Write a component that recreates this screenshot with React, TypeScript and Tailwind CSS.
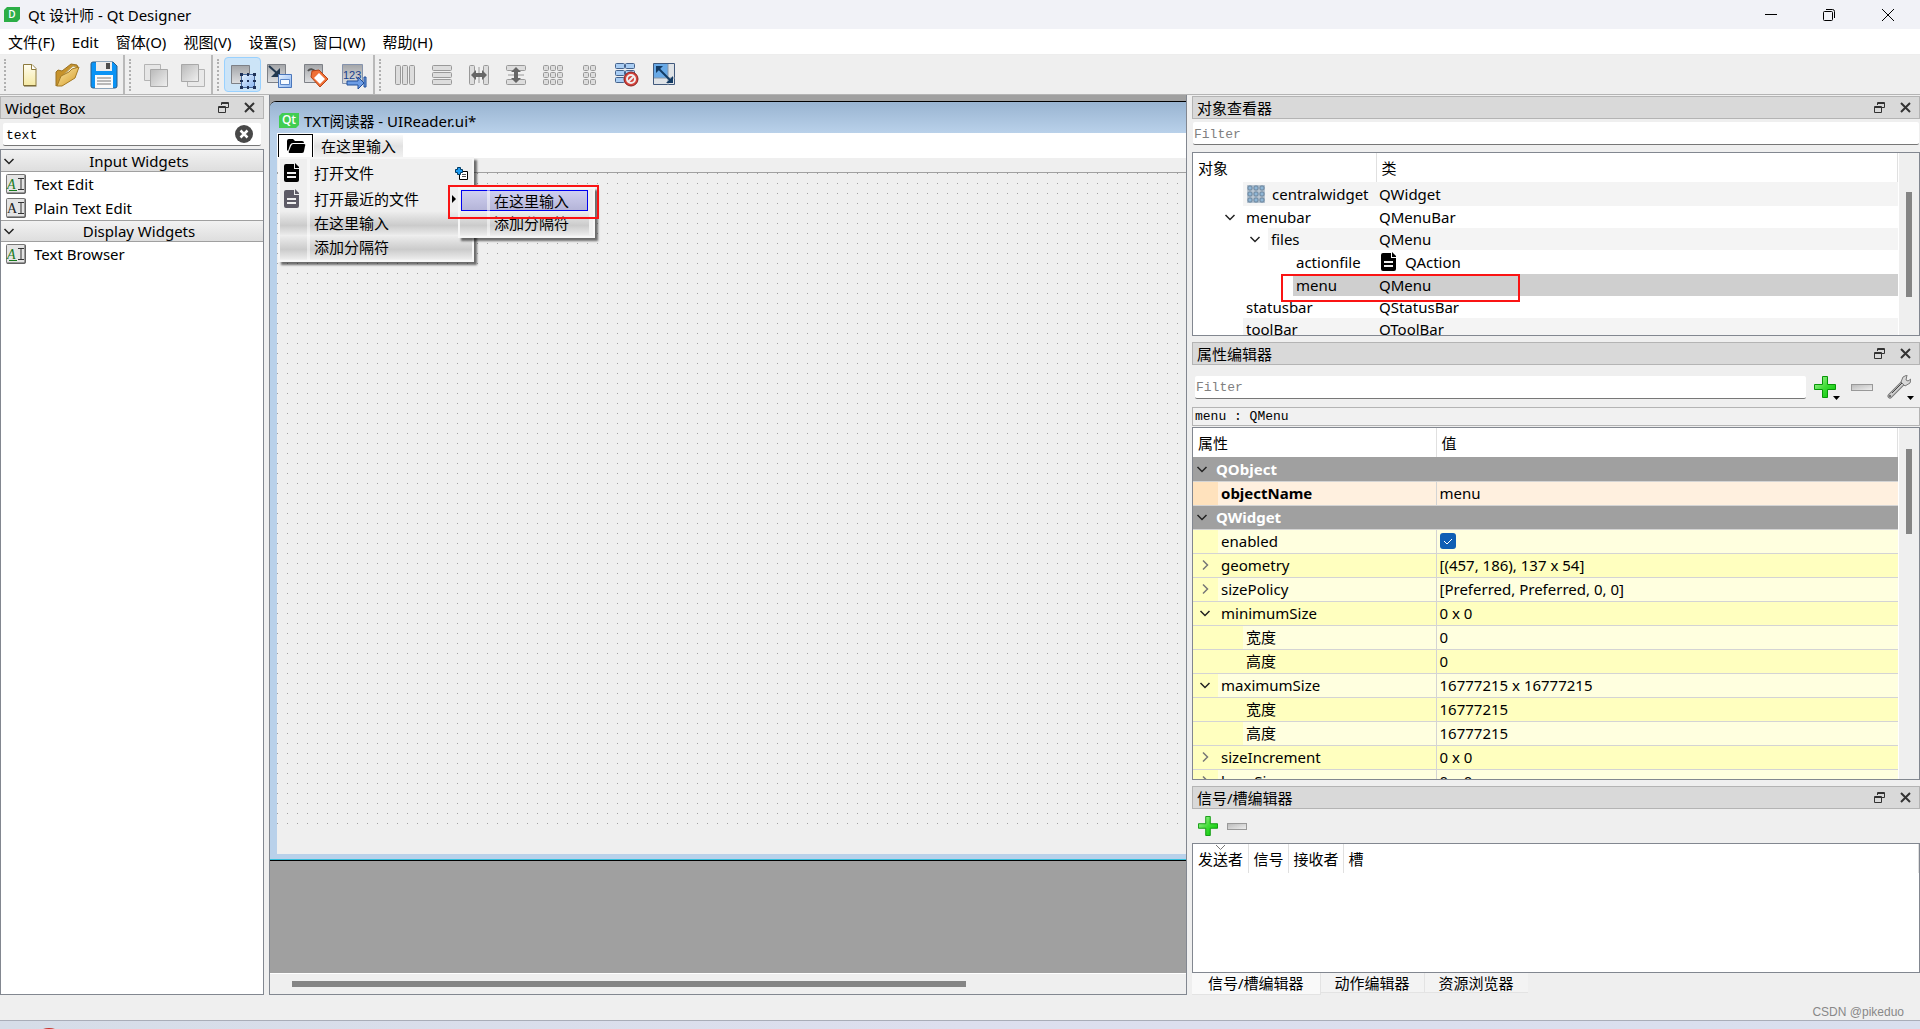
import { useState } from 'react'
import type { ReactNode } from 'react'
import clsx from 'clsx'

const menus = ['文件(F)', 'Edit', '窗体(O)', '视图(V)', '设置(S)', '窗口(W)', '帮助(H)']

function Gradients() {
  return (
    <svg width="0" height="0" className="absolute" aria-hidden="true">
      <defs>
        <linearGradient id="gray" x1="0" y1="0" x2="1" y2="1">
          <stop offset="0" stopColor="#b9b9b9" />
          <stop offset="1" stopColor="#f0f0f0" />
        </linearGradient>
        <linearGradient id="steel" x1="0" y1="0" x2="0" y2="1">
          <stop offset="0" stopColor="#a3a5a8" />
          <stop offset="1" stopColor="#dedfe1" />
        </linearGradient>
        <linearGradient id="sky" x1="0" y1="0" x2="1" y2="1">
          <stop offset="0" stopColor="#e6f2ff" />
          <stop offset="1" stopColor="#8bb5f0" />
        </linearGradient>
        <linearGradient id="paper" x1="0" y1="0" x2="0" y2="1">
          <stop offset="0" stopColor="#fffdf0" />
          <stop offset="1" stopColor="#f5e9a4" />
        </linearGradient>
        <linearGradient id="gold" x1="0" y1="0" x2="1" y2="1">
          <stop offset="0" stopColor="#fbe9a8" />
          <stop offset="1" stopColor="#d59a26" />
        </linearGradient>
        <linearGradient id="green" x1="0" y1="0" x2="1" y2="1">
          <stop offset="0" stopColor="#b8f5a8" />
          <stop offset="0.5" stopColor="#3fdc36" />
          <stop offset="1" stopColor="#00c400" />
        </linearGradient>
      </defs>
    </svg>
  )
}

function Icon({ children, size = 28 }: { children: ReactNode; size?: number }) {
  return (
    <svg width={size} height={size} viewBox={`0 0 ${size} ${size}`} fill="none" aria-hidden="true" className="shrink-0">
      {children}
    </svg>
  )
}

const NewIcon = () => (
  <Icon>
    <path d="M7.500 3.500h8.500l4 4v17H7.500z" fill="url(#paper)" stroke="#8d7a3c" />
    <path d="M15.500 3.500v5h4.500" fill="#fff" stroke="#8d7a3c" />
    <path d="M8 25h12.500" stroke="#6d5f30" />
  </Icon>
)

const OpenIcon = () => (
  <Icon>
    <path d="M3 11l2-2 4 1L18 3l6 1 1 3-17 15-5 3z" fill="#c7932c" stroke="#9a7223" />
    <path d="M6 18L20 5l3 1v4L8 22z" fill="#f4f0de" stroke="#b7a060" />
    <path d="M4 25l4-10 8-4 3-3 7-2-4 11-13 8z" fill="url(#gold)" stroke="#a57a22" />
  </Icon>
)

const SaveIcon = () => (
  <Icon>
    <path d="M1 3q0-2 2-2h20l4 4v20q0 2-2 2H3q-2 0-2-2z" fill="#0a93f5" stroke="#2a5d88" />
    <path d="M6 1h16v9H6z" fill="#ececec" />
    <path d="M16 2h4v6h-4z" fill="#4d4d4d" />
    <path d="M5 14h18v13H5z" fill="#fafafa" />
    <path d="M7 17h14M7 20h14M7 23h14" stroke="#777" />
  </Icon>
)

const BackIcon = () => (
  <Icon>
    <path d="M3.500 3.500h16v16h-16z" fill="#e6e6e6" stroke="#b4b4b4" />
    <path d="M9.500 8.500h17v17h-17z" fill="url(#gray)" stroke="#a8a8a8" />
  </Icon>
)

const FrontIcon = () => (
  <Icon>
    <path d="M9.500 8.500h17v17h-17z" fill="#e9e9e9" stroke="#b4b4b4" />
    <path d="M3.500 3.500h17v17h-17z" fill="url(#gray)" stroke="#a8a8a8" />
  </Icon>
)

const EditWidgetsIcon = () => (
  <Icon>
    <path d="M2.500 4.500h18v18h-18z" fill="url(#steel)" stroke="#7d8086" />
    <path d="M12.500 13.500h13v13h-13z" fill="url(#sky)" stroke="#47699c" />
    <path d="M11 12h3v3h-3zM18 12h2v3h-2zM24 12h3v3h-3zM11 19h3v2h-3zM24 19h3v2h-3zM11 25h3v3h-3zM18 25h2v3h-2zM24 25h3v3h-3zM18 19h2v2h-2z" fill="#1f3157" />
  </Icon>
)

const SignalsIcon = () => (
  <Icon>
    <path d="M1.500 3.500h18v18h-18z" fill="url(#steel)" stroke="#7d8086" />
    <path d="M3 5l10 9" stroke="#22384f" strokeWidth="2" />
    <path d="M14 7v9H5z" fill="#22384f" />
    <path d="M12.500 13.500h13v13h-13z" fill="url(#sky)" stroke="#4a76bb" />
    <path d="M14.500 18.500h9v5h-9z" fill="#f5faff" stroke="#5b87c9" />
  </Icon>
)

const BuddiesIcon = () => (
  <Icon>
    <path d="M1.500 3.500h18v18h-18z" fill="url(#steel)" stroke="#7d8086" />
    <path d="M5 10q3-4 8 1" stroke="#505050" strokeWidth="2" />
    <path d="M9 10l7-1 9 9-8 8-9-10z" fill="#ef6f35" stroke="#b54316" />
    <path d="M16 12l6 6-5 5-6-6z" fill="#fff" />
  </Icon>
)

const TabOrderIcon = () => (
  <Icon>
    <path d="M2.500 3.500h20v19h-20z" fill="url(#steel)" stroke="#8593ad" />
    <text x="3" y="18" fontSize="11" fill="#17408c" fontFamily="Liberation Sans, sans-serif">123</text>
    <path d="M7 20h11v-4l6 6-6 6v-4H7z" fill="#6d9de5" stroke="#204e99" />
    <path d="M24 16h2v10h-2z" fill="#6d9de5" stroke="#204e99" />
  </Icon>
)

const cell = { fill: '#ddd', stroke: '#999' }

const HLayoutIcon = () => (
  <Icon>
    {[4, 11, 18].map((x) => (
      <rect key={x} x={x + 0.5} y="4.5" width="5" height="19" rx="1" {...cell} />
    ))}
  </Icon>
)

const VLayoutIcon = () => (
  <Icon>
    {[4, 11, 18].map((y) => (
      <rect key={y} x="4.500" y={y + 0.5} width="19" height="5" rx="1" {...cell} />
    ))}
  </Icon>
)

const HSplitIcon = () => (
  <Icon>
    <rect x="4.500" y="4.500" width="5" height="19" rx="1" {...cell} />
    <rect x="18.500" y="4.500" width="5" height="19" rx="1" {...cell} />
    <path d="M14 6v16" stroke="#9a9a9a" />
    <path d="M6 14l5-5v3h6V9l5 5-5 5v-3h-6v3z" fill="#666" />
  </Icon>
)

const VSplitIcon = () => (
  <Icon>
    <rect x="4.500" y="4.500" width="19" height="5" rx="1" {...cell} />
    <rect x="4.500" y="18.500" width="19" height="5" rx="1" {...cell} />
    <path d="M6 14h16" stroke="#9a9a9a" />
    <path d="M14 6l5 5h-3v6h3l-5 5-5-5h3v-6H9z" fill="#666" />
  </Icon>
)

const GridIcon = () => (
  <Icon>
    {[4, 11, 18].map((x) =>
      [4, 11, 18].map((y) => <rect key={`${x}-${y}`} x={x + 0.5} y={y + 0.5} width="5" height="5" rx="1" {...cell} />)
    )}
  </Icon>
)

const FormLayoutIcon = () => (
  <Icon>
    {[7, 14].map((x) =>
      [4, 11, 18].map((y) => <rect key={`${x}-${y}`} x={x + 0.5} y={y + 0.5} width="5" height="5" rx="1" {...cell} />)
    )}
  </Icon>
)

const BreakLayoutIcon = () => (
  <Icon>
    {[3, 10, 17].map((y) => (
      <g key={y} fill="#a9cdf3" stroke="#44628c">
        <rect x="2.500" y={y - 0.5} width="9" height="5" rx="1" />
        <rect x="12.500" y={y - 0.5} width="9" height="5" rx="1" />
      </g>
    ))}
    <circle cx="18" cy="18" r="7" fill="#d5433c" stroke="#8d2320" />
    <circle cx="18" cy="18" r="4" stroke="#eee" strokeWidth="2" />
    <path d="M15 21l6-6" stroke="#eee" strokeWidth="2" />
  </Icon>
)

const AdjustSizeIcon = () => (
  <Icon>
    <path d="M3.500 2.500h21v21h-21z" fill="#dfe3e7" stroke="#41597c" />
    <path d="M4 3h14v14H4z" fill="#68a9e6" />
    <path d="M18 3v21M4 17h21" stroke="#8a97a8" />
    <path d="M9 8l11 11" stroke="#123a63" strokeWidth="2" />
    <path d="M6 5h7l-7 7zM23 22h-7l7-7z" fill="#123a63" />
  </Icon>
)

const toolGroups = [
  [
    { name: '新建', icon: <NewIcon /> },
    { name: '打开', icon: <OpenIcon /> },
    { name: '保存', icon: <SaveIcon /> },
  ],
  [
    { name: '放到后面', icon: <BackIcon /> },
    { name: '放到前面', icon: <FrontIcon /> },
  ],
  [
    { name: '编辑控件', icon: <EditWidgetsIcon />, active: true },
    { name: '编辑信号/槽', icon: <SignalsIcon /> },
    { name: '编辑伙伴', icon: <BuddiesIcon /> },
    { name: '编辑Tab顺序', icon: <TabOrderIcon /> },
  ],
  [
    { name: '水平布局', icon: <HLayoutIcon /> },
    { name: '垂直布局', icon: <VLayoutIcon /> },
    { name: '水平分裂器', icon: <HSplitIcon /> },
    { name: '垂直分裂器', icon: <VSplitIcon /> },
    { name: '栅格布局', icon: <GridIcon /> },
    { name: '窗体布局', icon: <FormLayoutIcon /> },
    { name: '打破布局', icon: <BreakLayoutIcon /> },
    { name: '调整大小', icon: <AdjustSizeIcon /> },
  ],
]

function QtLogo({ letters, width }: { letters: string; width: number }) {
  return (
    <svg width={width} height="15" viewBox={`0 0 ${width} 15`} aria-hidden="true" className="shrink-0">
      <path d={`M3 0H${width}V12L${width - 3} 15H0V3z`} fill={letters === 'D' ? '#2cae46' : '#41cd52'} />
      <text x={width / 2} y="11" fontSize={letters === 'D' ? 10 : 12} fontWeight="600" textAnchor="middle" fill="#fff" fontFamily="Open Sans, sans-serif">
        {letters}
      </text>
    </svg>
  )
}

const DocIcon = ({ color = '#000' }: { color?: string }) => (
  <Icon size={20}>
    <path d="M4 1h8v5h5v11q0 2-2 2H4q-2 0-2-2V3q0-2 2-2z" fill={color} />
    <path d="M13 0l4 4v1h-4z" fill={color} />
    <path d="M5 10h9M5 14h9" stroke="#f0f0f0" strokeWidth="2" />
  </Icon>
)

const FolderIcon = () => (
  <Icon size={20}>
    <path d="M1 14V5q0-2 2-2h4l2 2h7q2 0 2 2H7q-2 0-3 2l-2 6z" fill="#000" />
    <path d="M7 8h11q2 0 1 2l-1 5q0 2-2 2H4q-2 0-1-2l2-5q1-2 2-2z" fill="#000" />
  </Icon>
)

const TextWidgetIcon = ({ color }: { color: string }) => (
  <Icon size={20}>
    <rect x="0.500" y="0.500" width="19" height="19" rx="1" fill="#e4e4e4" stroke="#777" />
    <path d="M19 1v18H1" stroke="#4f4f4f" />
    <text x="1" y="15" fontSize="14" fill={color} fontStyle={color === '#222' ? 'normal' : 'italic'} fontFamily="Liberation Serif, serif">A</text>
    {color !== '#222' && <path d="M3 16.500h8" stroke={color} />}
    <path d="M12 4.500h6M15 5v10M12 15.500h6" stroke="#333" />
  </Icon>
)

const WidgetGridIcon = () => (
  <Icon size={20}>
    <rect x="1" y="1" width="18" height="18" fill="#b9c6d3" />
    {[2, 8, 14].map((x) =>
      [2, 8, 14].map((y) => <rect key={`${x}-${y}`} x={x} y={y} width="4" height="4" rx="1" fill="#8fb6d6" stroke="#6a8299" />)
    )}
  </Icon>
)

const PlusIcon = ({ size }: { size: number }) => (
  <svg width={size} height={size} viewBox="0 0 22 22" aria-hidden="true">
    <path d="M8.500.5h5v8h8v5h-8v8h-5v-8h-8v-5h8z" fill="url(#green)" stroke="#079607" />
  </svg>
)

const MinusIcon = ({ width }: { width: number }) => (
  <svg width={width} height="7" viewBox={`0 0 ${width} 7`} aria-hidden="true">
    <rect x="0.500" y="0.500" width={width - 1} height="6" fill="url(#gray)" stroke="#999" />
  </svg>
)

const DropArrow = () => (
  <svg width="7" height="4" viewBox="0 0 7 4" aria-hidden="true" className="absolute right-0 bottom-0">
    <path d="M0 0h7L3.500 4z" />
  </svg>
)

const Chevron = ({ open, dim }: { open: boolean; dim?: boolean }) => (
  <svg width="12" height="12" viewBox="0 0 12 12" fill="none" stroke={dim ? '#777' : '#222'} strokeWidth="1.500" aria-hidden="true" className="shrink-0">
    <path d={open ? 'M1.500 4L6 8.500 10.500 4' : 'M4 1.500L8.500 6 4 10.500'} />
  </svg>
)

function DockTitle({ title }: { title: string }) {
  return (
    <div className="flex h-[23px] shrink-0 items-center justify-between border border-[#b4b4b4] bg-[#d9d9d9] pr-2 pl-1">
      <h2>{title}</h2>
      <div className="flex gap-[15px]">
        <button type="button" aria-label="浮动">
          <svg width="11" height="11" viewBox="0 0 11 11" fill="none" stroke="#333" aria-hidden="true">
            <path d="M3.500 3V.5h7v5H8M3 1.500h8" />
            <path d="M.5 4.500h7v6h-7zM1 5.500h6" />
          </svg>
        </button>
        <button type="button" aria-label="关闭">
          <svg width="11" height="11" viewBox="0 0 11 11" stroke="#333" strokeWidth="2" aria-hidden="true">
            <path d="M1 1l9 9M10 1l-9 9" />
          </svg>
        </button>
      </div>
    </div>
  )
}

function TitleBar() {
  return (
    <header className="flex h-[29px] shrink-0 items-center justify-between bg-[#f1f2f7]">
      <div className="flex items-center gap-2 pl-1">
        <QtLogo letters="D" width={16} />
        <h1>Qt 设计师 - Qt Designer</h1>
      </div>
      <div className="flex h-full items-center pr-[2px]">
        <button type="button" aria-label="最小化" className="flex w-[58px] justify-center">
          <svg width="12" height="12" stroke="#000" aria-hidden="true"><path d="M0 5.500h12" /></svg>
        </button>
        <button type="button" aria-label="还原" className="flex w-[58px] justify-center">
          <svg width="12" height="12" fill="none" stroke="#000" aria-hidden="true">
            <rect x="0.500" y="2.500" width="9" height="9" rx="1" />
            <path d="M3 .5h6.500q2 0 2 2V9" />
          </svg>
        </button>
        <button type="button" aria-label="关闭" className="flex w-[60px] justify-center">
          <svg width="12" height="12" stroke="#000" aria-hidden="true"><path d="M0 0l12 12M12 0L0 12" /></svg>
        </button>
      </div>
    </header>
  )
}

function Toolbar() {
  return (
    <div className="flex h-10 shrink-0 border-b border-[#b4b4b4] bg-[#efefef]">
      {toolGroups.map((group, i) => (
        <div key={i} className={clsx('flex items-center', i < toolGroups.length - 1 && 'border-r-2 border-[#b9b9b9] pr-px')}>
          <div className="ml-1 h-8 w-[7px] border-l-2 border-dotted border-[#b0b0b0]" />
          {group.map((tool) => (
            <button
              key={tool.name}
              type="button"
              aria-label={tool.name}
              className={clsx(
                'flex h-[35px] w-[37px] items-center justify-center rounded-sm border',
                'active' in tool ? 'border-[#99d1ff] bg-[#cce4f7]' : 'border-transparent'
              )}
            >
              {tool.icon}
            </button>
          ))}
        </div>
      ))}
    </div>
  )
}

const widgetGroups = [
  { title: 'Input Widgets', items: [{ name: 'Text Edit', color: '#177a1c' }, { name: 'Plain Text Edit', color: '#222' }] },
  { title: 'Display Widgets', items: [{ name: 'Text Browser', color: '#177a1c' }] },
]

function WidgetBox() {
  const [query, setQuery] = useState('text')

  return (
    <aside className="flex w-[264px] shrink-0 flex-col pt-px">
      <DockTitle title="Widget Box" />
      <div className="mx-[3px] mt-1 mb-[3px] flex h-[23px] shrink-0 items-center rounded-xs border-b border-[#777] bg-white pr-2 pl-[3px]">
        <input
          aria-label="Filter"
          value={query}
          onChange={(e) => setQuery(e.target.value)}
          className="min-w-0 flex-1 pt-1 font-[Liberation_Mono,monospace] text-[13px] outline-none"
        />
        <button type="button" aria-label="清除" onClick={() => setQuery('')}>
          <svg width="18" height="18" viewBox="0 0 18 18" aria-hidden="true">
            <circle cx="9" cy="9" r="9" fill="#484848" />
            <path d="M5.500 5.500l7 7M12.500 5.500l-7 7" stroke="#fff" strokeWidth="2.500" />
          </svg>
        </button>
      </div>
      <div className="flex-1 border border-[#828790] bg-white">
        {widgetGroups.map((group, i) => (
          <section key={group.title}>
            <button
              type="button"
              className={clsx(
                'flex h-[22px] w-full items-center border-b border-[#a0a0a0] bg-linear-to-b from-[#f2f2f2] to-[#dedede] pl-[2px]',
                i > 0 && 'border-t'
              )}
            >
              <Chevron open />
              <span className="flex-1">{group.title}</span>
            </button>
            <ul>
              {group.items.map((item) => (
                <li key={item.name} className="flex h-6 items-center gap-2 pl-[5px]">
                  <TextWidgetIcon color={item.color} />
                  {item.name}
                </li>
              ))}
            </ul>
          </section>
        ))}
      </div>
    </aside>
  )
}

function FormWindow() {
  return (
    <section className="relative flex h-[760px] flex-col rounded-tl-md border-t border-b border-black bg-[#b9d1ea] shadow-[inset_0_-1px_0_#35bfdc]">
      <div className="flex h-[31px] shrink-0 items-center gap-[5px] rounded-tl-md bg-linear-to-b from-[#99b4d1] to-[#b9d1ea] pt-[6px] pl-[9px]">
        <QtLogo letters="Qt" width={20} />
        <h2>TXT阅读器 - UIReader.ui*</h2>
      </div>
      <div className="mb-[6px] ml-[7px] flex flex-1 flex-col bg-[#efefef]">
        <div className="flex h-[25px] shrink-0 items-center bg-white">
          <button type="button" aria-label="files" className="ml-px flex h-6 w-[35px] items-center justify-center border border-b-0 border-black">
            <FolderIcon />
          </button>
          <button type="button" className="ml-px h-[22px] bg-linear-to-b from-[#fafafa] via-[#e2e2e2] to-[#f0f0f0] px-[7px]">
            在这里输入
          </button>
        </div>
        <div className="h-[15px] shrink-0 border-b border-[#a0a0a0]" />
        <div className="mb-[22px] flex-1 bg-[conic-gradient(from_270deg_at_1px_1px,#a0a0a0_90deg,transparent_0)] bg-[size:10px_10px]" />
      </div>
      <FilesMenu />
    </section>
  )
}

function FilesMenu() {
  const special = 'bg-linear-to-b from-[#efefef] via-[#cbcbcb] via-60% to-[#ebebeb]'
  const gutter = 'pointer-events-none absolute inset-y-0 left-[27px] w-[3px] bg-white/50'

  return (
    <div className="absolute top-[55px] left-2 z-10 w-[196px] border-2 border-[#f6f6f6] bg-[#efefef] pb-px shadow-[3px_3px_2px_rgba(0,0,0,0.55)]">
      <div className={gutter} />
      <ul className="flex flex-col">
        <li className="flex h-7 items-center pr-1 pl-[2px]">
          <DocIcon />
          <span className="flex-1 pl-3">打开文件</span>
          <svg width="13" height="13" viewBox="0 0 13 13" aria-hidden="true">
            <path d="M4.500 4.500h8v8h-8z" fill="#fff" stroke="#000" />
            <path d="M7 7.500h4M7 9.500h4" stroke="#555" />
            <path d="M2.500.5h3v2h2v3h-2v2h-3v-2h-2v-3h2z" fill="#1e9bf0" stroke="#003c66" />
          </svg>
        </li>
        <li className="flex h-6 items-center pr-4 pl-[2px]">
          <DocIcon color="#5d5b66" />
          <span className="flex-1 pl-3">打开最近的文件</span>
          <svg width="4" height="8" viewBox="0 0 4 8" aria-hidden="true"><path d="M0 0l4 4-4 4z" /></svg>
        </li>
        <li className={clsx('flex h-6 items-center pl-[34px]', special)}>在这里输入</li>
        <li className={clsx('flex h-6 items-center pl-[34px]', special)}>添加分隔符</li>
      </ul>
      <div className="absolute top-7 left-[178px] w-[137px] border-2 border-[#f6f6f6] bg-[#efefef] py-px shadow-[3px_3px_2px_rgba(0,0,0,0.55)]">
        <ul>
          <li className="mr-[5px] ml-px flex h-[21px] items-center border border-[#0000f0] bg-linear-to-b from-[#cfcff0] to-[#b5b5d8] pl-8">在这里输入</li>
          <li className={clsx('mr-1 flex h-6 items-center pl-[34px]', special)}>添加分隔符</li>
        </ul>
        <div className={gutter} />
        <div className="pointer-events-none absolute -top-1 -left-3 h-[34px] w-[151px] border-2 border-[#fa1414]" />
      </div>
    </div>
  )
}

function MdiArea() {
  return (
    <main className="flex min-w-0 flex-1 flex-col overflow-hidden border border-t-0 border-[#828790] bg-[#a0a0a0] pt-[6px]">
      <FormWindow />
      <div className="flex-1" />
      <div className="flex h-[21px] shrink-0 items-center border-t border-white bg-[#efefef] pr-[220px] pl-[22px]">
        <div className="h-[6px] flex-1 bg-[#858585]" />
      </div>
    </main>
  )
}

interface ObjectRow {
  name: string
  type: string
  depth: number
  open?: boolean
  icon?: ReactNode
  typeIcon?: ReactNode
  selected?: boolean
}

const objects: ObjectRow[] = [
  { name: 'centralwidget', type: 'QWidget', depth: 2, icon: <WidgetGridIcon /> },
  { name: 'menubar', type: 'QMenuBar', depth: 2, open: true },
  { name: 'files', type: 'QMenu', depth: 3, open: true },
  { name: 'actionfile', type: 'QAction', depth: 4, typeIcon: <DocIcon /> },
  { name: 'menu', type: 'QMenu', depth: 4, selected: true },
  { name: 'statusbar', type: 'QStatusBar', depth: 2 },
  { name: 'toolBar', type: 'QToolBar', depth: 2 },
]

const objectIndent: Record<number, string> = { 2: 'w-[50px]', 3: 'w-[75px]', 4: 'w-[100px]' }

function ScrollBar({ thumb }: { thumb: string }) {
  return (
    <div className="flex w-[21px] shrink-0 justify-center border-l border-white bg-[#efefef]">
      <div className={clsx('w-[6px] bg-[#858585]', thumb)} />
    </div>
  )
}

function ObjectInspector() {
  return (
    <section>
      <DockTitle title="对象查看器" />
      <div className="px-px pt-[3px] pb-[7px]">
        <input
          aria-label="Filter objects"
          placeholder="Filter"
          className="block h-[23px] w-full rounded-xs border-b border-[#777] bg-white pt-[2px] pl-px font-[Liberation_Mono,monospace] text-[13px] outline-none placeholder:text-[#808080]"
        />
      </div>
      <div className="relative flex h-[184px] border border-[#828790] bg-white">
        <div className="min-w-0 flex-1 overflow-hidden">
          <table className="w-full table-fixed border-collapse text-left">
            <thead>
              <tr className="h-[29px]">
                <th className="w-[183px] border-r border-[#e0e0e0] pl-[5px] font-normal">对象</th>
                <th className="border-r border-[#e0e0e0] pl-[5px] font-normal">类</th>
              </tr>
            </thead>
            <tbody>
              {objects.map((row, i) => {
                const fill = row.selected ? 'bg-[#cfcfcf]' : i % 2 === 0 ? 'bg-[#f4f4f4]' : 'bg-white'
                const height = row.icon || row.typeIcon ? 'h-6' : 'h-[22px]'
                return (
                  <tr key={row.name}>
                    <td className="p-0">
                      <div className={clsx('flex', height)}>
                        <div className={clsx('flex shrink-0 items-center justify-end bg-white pr-[7px]', objectIndent[row.depth])}>
                          {row.open && <Chevron open />}
                        </div>
                        <div className={clsx('flex flex-1 items-center gap-[6px] pl-[3px]', fill)}>
                          {row.icon}
                          {row.name}
                        </div>
                      </div>
                    </td>
                    <td className={clsx('p-0', fill)}>
                      <div className="flex items-center gap-[6px] pl-[3px]">
                        {row.typeIcon}
                        {row.type}
                      </div>
                    </td>
                  </tr>
                )
              })}
            </tbody>
          </table>
        </div>
        <ScrollBar thumb="mt-[39px] h-[105px]" />
        <div className="pointer-events-none absolute top-[121px] left-[88px] h-7 w-[239px] border-2 border-[#fa1414]" />
      </div>
    </section>
  )
}

interface PropertyRow {
  name: string
  value?: ReactNode
  kind?: 'group' | 'child' | 'changed'
  open?: boolean
}

const properties: PropertyRow[] = [
  { name: 'QObject', kind: 'group', open: true },
  { name: 'objectName', value: 'menu', kind: 'changed' },
  { name: 'QWidget', kind: 'group', open: true },
  {
    name: 'enabled',
    value: (
      <span className="relative flex">
        <input type="checkbox" defaultChecked aria-label="enabled" className="size-4 appearance-none rounded-[3px] bg-[#0f5fb4]" />
        <svg width="16" height="16" fill="none" stroke="#fff" aria-hidden="true" className="pointer-events-none absolute inset-0">
          <path d="M4 8l3 3 5-5" />
        </svg>
      </span>
    ),
  },
  { name: 'geometry', value: '[(457, 186), 137 x 54]', open: false },
  { name: 'sizePolicy', value: '[Preferred, Preferred, 0, 0]', open: false },
  { name: 'minimumSize', value: '0 x 0', open: true },
  { name: '宽度', value: '0', kind: 'child' },
  { name: '高度', value: '0', kind: 'child' },
  { name: 'maximumSize', value: '16777215 x 16777215', open: true },
  { name: '宽度', value: '16777215', kind: 'child' },
  { name: '高度', value: '16777215', kind: 'child' },
  { name: 'sizeIncrement', value: '0 x 0', open: false },
  { name: 'baseSize', value: '0 x 0', open: false },
]

function PropertyEditor() {
  return (
    <section className="mt-[6px]">
      <DockTitle title="属性编辑器" />
      <div className="flex h-[42px] items-center pt-[2px] pr-[6px] pl-[3px]">
        <input
          aria-label="Filter properties"
          placeholder="Filter"
          className="h-[23px] min-w-0 flex-1 rounded-xs border-b border-[#777] bg-white pt-[2px] pl-px font-[Liberation_Mono,monospace] text-[13px] outline-none placeholder:text-[#808080]"
        />
        <button type="button" aria-label="添加动态属性" className="relative ml-2 h-[26px] w-[26px]">
          <PlusIcon size={22} />
          <DropArrow />
        </button>
        <button type="button" aria-label="删除动态属性" className="ml-[11px]">
          <MinusIcon width={22} />
        </button>
        <button type="button" aria-label="配置" className="relative ml-[14px] h-[26px] w-[27px]">
          <svg width="24" height="24" viewBox="0 0 24 24" fill="none" aria-hidden="true">
            <path d="M3 21L17 7" stroke="#777" strokeWidth="5" strokeLinecap="round" />
            <path d="M3 21L17 7" stroke="#ccc" strokeWidth="3" strokeLinecap="round" />
            <path d="M5 18L15 8" stroke="#444" />
            <path d="M14 7l2-5 4-2-1 5 2 1 3-2-1 4-5 3z" fill="#d8d8d8" stroke="#777" />
            <circle cx="3" cy="21" r="1" fill="#555" />
          </svg>
          <DropArrow />
        </button>
      </div>
      <div className="h-[19px] border border-[#b4b4b4] bg-[#f1f1f1] pt-px pl-[2px] font-[Liberation_Mono,monospace] text-[13px] leading-4 whitespace-pre">
        menu : QMenu
      </div>
      <div className="mt-px flex h-[353px] border border-[#828790] bg-white">
        <div className="min-w-0 flex-1 overflow-hidden">
          <table className="w-full table-fixed border-collapse text-left">
            <thead>
              <tr className="h-[29px]">
                <th className="w-[243px] border-r border-[#e0e0e0] pl-[5px] font-normal">属性</th>
                <th className="border-r border-[#e0e0e0] pl-[5px] font-normal">值</th>
              </tr>
            </thead>
            <tbody>
              {properties.map((row, i) => {
                if (row.kind === 'group') {
                  return (
                    <tr key={i} className="h-6 border-b border-[#d4d4d4] bg-[#a0a0a0] font-bold text-white">
                      <td colSpan={2} className="p-0">
                        <div className="flex items-center gap-2 pl-[3px]">
                          <Chevron open />
                          {row.name}
                        </div>
                      </td>
                    </tr>
                  )
                }
                const changed = row.kind === 'changed'
                const fill = changed ? 'bg-[#fff0df]' : i % 2 === 0 ? 'bg-[#ffffbf]' : 'bg-[#ffffdf]'
                return (
                  <tr key={i} className={clsx('h-6 border-b border-[#d4d4d4]', fill)}>
                    <td className="border-r border-[#d4d4d4] p-0">
                      <div className="flex h-[23px]">
                        <div
                          className={clsx(
                            'flex shrink-0 items-center pl-[6px]',
                            row.kind === 'child' ? 'w-[50px]' : 'w-[25px]',
                            changed ? 'bg-[#ffe2bd]' : 'bg-[#ffffbf]'
                          )}
                        >
                          {row.open !== undefined && <Chevron open={row.open} dim={!row.open} />}
                        </div>
                        <div className={clsx('flex items-center pl-[3px]', changed && 'font-bold')}>{row.name}</div>
                      </div>
                    </td>
                    <td className="p-0 pl-[3px]">{row.value}</td>
                  </tr>
                )
              })}
            </tbody>
          </table>
        </div>
        <ScrollBar thumb="mt-[21px] h-[85px]" />
      </div>
    </section>
  )
}

function SignalEditor() {
  return (
    <section className="mt-[6px] flex min-h-0 flex-1 flex-col">
      <DockTitle title="信号/槽编辑器" />
      <div className="flex h-[34px] shrink-0 items-center gap-[9px] pl-[6px]">
        <button type="button" aria-label="添加"><PlusIcon size={20} /></button>
        <button type="button" aria-label="删除"><MinusIcon width={20} /></button>
      </div>
      <div className="flex-1 border border-[#828790] bg-white">
        <table className="w-full border-collapse text-left">
          <thead>
            <tr className="h-[29px]">
              <th className="relative w-[55px] border-r border-[#e0e0e0] pl-[5px] font-normal whitespace-nowrap">
                <svg width="9" height="5" fill="none" stroke="#777" aria-hidden="true" className="absolute top-px left-[23px]">
                  <path d="M0 0l4.500 4.500L9 0" />
                </svg>
                发送者
              </th>
              <th className="w-10 border-r border-[#e0e0e0] pl-[5px] font-normal whitespace-nowrap">信号</th>
              <th className="w-[55px] border-r border-[#e0e0e0] pl-[5px] font-normal whitespace-nowrap">接收者</th>
              <th className="border-r border-[#e0e0e0] pl-[5px] font-normal">槽</th>
            </tr>
          </thead>
        </table>
      </div>
      <div role="tablist" className="flex h-[22px] shrink-0 items-start">
        <button type="button" role="tab" aria-selected="true" className="h-[22px] border-r border-b border-[#e3e3e3] bg-[#f9f9f9] px-4 pb-[2px]">
          信号/槽编辑器
        </button>
        <button type="button" role="tab" aria-selected="false" className="h-5 border-r border-b border-[#e3e3e3] bg-[#f3f3f3] px-[14px] pb-[2px]">
          动作编辑器
        </button>
        <button type="button" role="tab" aria-selected="false" className="h-5 border-b border-[#e3e3e3] bg-[#f3f3f3] px-[14px] pb-[2px]">
          资源浏览器
        </button>
      </div>
    </section>
  )
}

export default function App() {
  return (
    <div className="flex h-screen flex-col overflow-hidden bg-[#efefef] font-[Noto_Sans,Noto_Sans_CJK_SC,sans-serif] text-[15px] leading-5 text-black">
      <Gradients />
      <TitleBar />
      <nav className="flex h-[26px] shrink-0 items-center gap-px border-b border-[#ededed] bg-white">
        {menus.map((menu) => (
          <button key={menu} type="button" className="px-2">{menu}</button>
        ))}
      </nav>
      <Toolbar />
      <div className="flex min-h-0 flex-1 gap-[5px]">
        <WidgetBox />
        <MdiArea />
        <aside className="flex w-[728px] shrink-0 flex-col overflow-hidden pt-px">
          <ObjectInspector />
          <PropertyEditor />
          <SignalEditor />
        </aside>
      </div>
      <footer className="shrink-0">
        <p className="h-[25px] pt-[7px] pr-4 text-right font-[Liberation_Sans,sans-serif] text-xs leading-5 text-[#888]">CSDN @pikeduo</p>
        <div className="h-[9px] overflow-hidden border-t border-[#a9adb8] bg-linear-to-r from-[#d6dde8] via-[#dddfee] to-[#d9dfee]">
          <svg width="100" height="8" aria-hidden="true">
            <ellipse cx="49" cy="11" rx="9" ry="4" fill="#c8322b" />
          </svg>
        </div>
      </footer>
    </div>
  )
}
